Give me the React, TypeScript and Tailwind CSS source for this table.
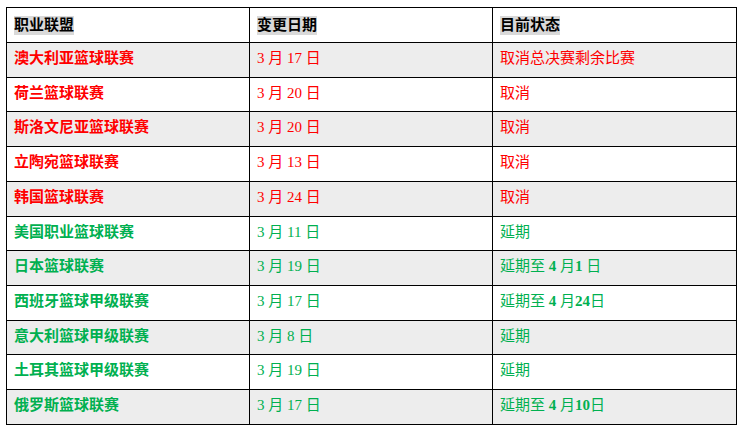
const RED = 'text-[#ff0000]'
const GREEN = 'text-[#00b050]'

interface Row {
  league: string
  date: string
  status: string
  red: boolean
}

const rows: Row[] = [
  { league: '澳大利亚篮球联赛', date: '3 月 17 日', status: '取消总决赛剩余比赛', red: true },
  { league: '荷兰篮球联赛', date: '3 月 20 日', status: '取消', red: true },
  { league: '斯洛文尼亚篮球联赛', date: '3 月 20 日', status: '取消', red: true },
  { league: '立陶宛篮球联赛', date: '3 月 13 日', status: '取消', red: true },
  { league: '韩国篮球联赛', date: '3 月 24 日', status: '取消', red: true },
  { league: '美国职业篮球联赛', date: '3 月 11 日', status: '延期', red: false },
  { league: '日本篮球联赛', date: '3 月 19 日', status: '延期至 4 月1 日', red: false },
  { league: '西班牙篮球甲级联赛', date: '3 月 17 日', status: '延期至 4 月24日', red: false },
  { league: '意大利篮球甲级联赛', date: '3 月 8 日', status: '延期', red: false },
  { league: '土耳其篮球甲级联赛', date: '3 月 19 日', status: '延期', red: false },
  { league: '俄罗斯篮球联赛', date: '3 月 17 日', status: '延期至 4 月10日', red: false },
]

// digits in the status column are bold, CJK stays regular
function Status({ text }: { text: string }) {
  const parts = text.split(/(\d+)/)
  return (
    <>
      {parts.map((p, i) =>
        /^\d+$/.test(p) ? (
          <b key={i} className="font-bold">{p}</b>
        ) : (
          <span key={i}>{p}</span>
        )
      )}
    </>
  )
}

export default function App() {
  return (
    <div className="w-[743px] h-[431px] bg-white pt-[7px] pl-[6px] font-['Liberation_Serif','Noto_Sans_CJK_SC',serif] text-[15px]">
      <table className="border-collapse table-fixed w-[730px]">
        <colgroup>
          <col className="w-[243px]" />
          <col className="w-[243px]" />
          <col className="w-[244px]" />
        </colgroup>
        <thead>
          <tr className="h-[35px] bg-white">
            {['职业联盟', '变更日期', '目前状态'].map((h) => (
              <th key={h} className="border border-black align-top text-left pl-[7px] pt-[6px] font-bold">
                <span className="inline-block bg-[#d9d9d9] leading-[19px] text-black">{h}</span>
              </th>
            ))}
          </tr>
        </thead>
        <tbody>
          {rows.map((r, i) => {
            const color = r.red ? RED : GREEN
            return (
              <tr key={r.league} className={`h-[34.73px] ${i % 2 === 0 ? 'bg-[#ededed]' : 'bg-white'}`}>
                <td className={`border border-black align-top pl-[7px] pt-[5px] leading-[20px] font-bold ${color}`}>
                  {r.league}
                </td>
                <td className={`border border-black align-top pl-[7px] pt-[5px] leading-[20px] ${color}`}>
                  {r.date}
                </td>
                <td className={`border border-black align-top pl-[7px] pt-[5px] leading-[20px] ${color}`}>
                  <Status text={r.status} />
                </td>
              </tr>
            )
          })}
        </tbody>
      </table>
    </div>
  )
}
